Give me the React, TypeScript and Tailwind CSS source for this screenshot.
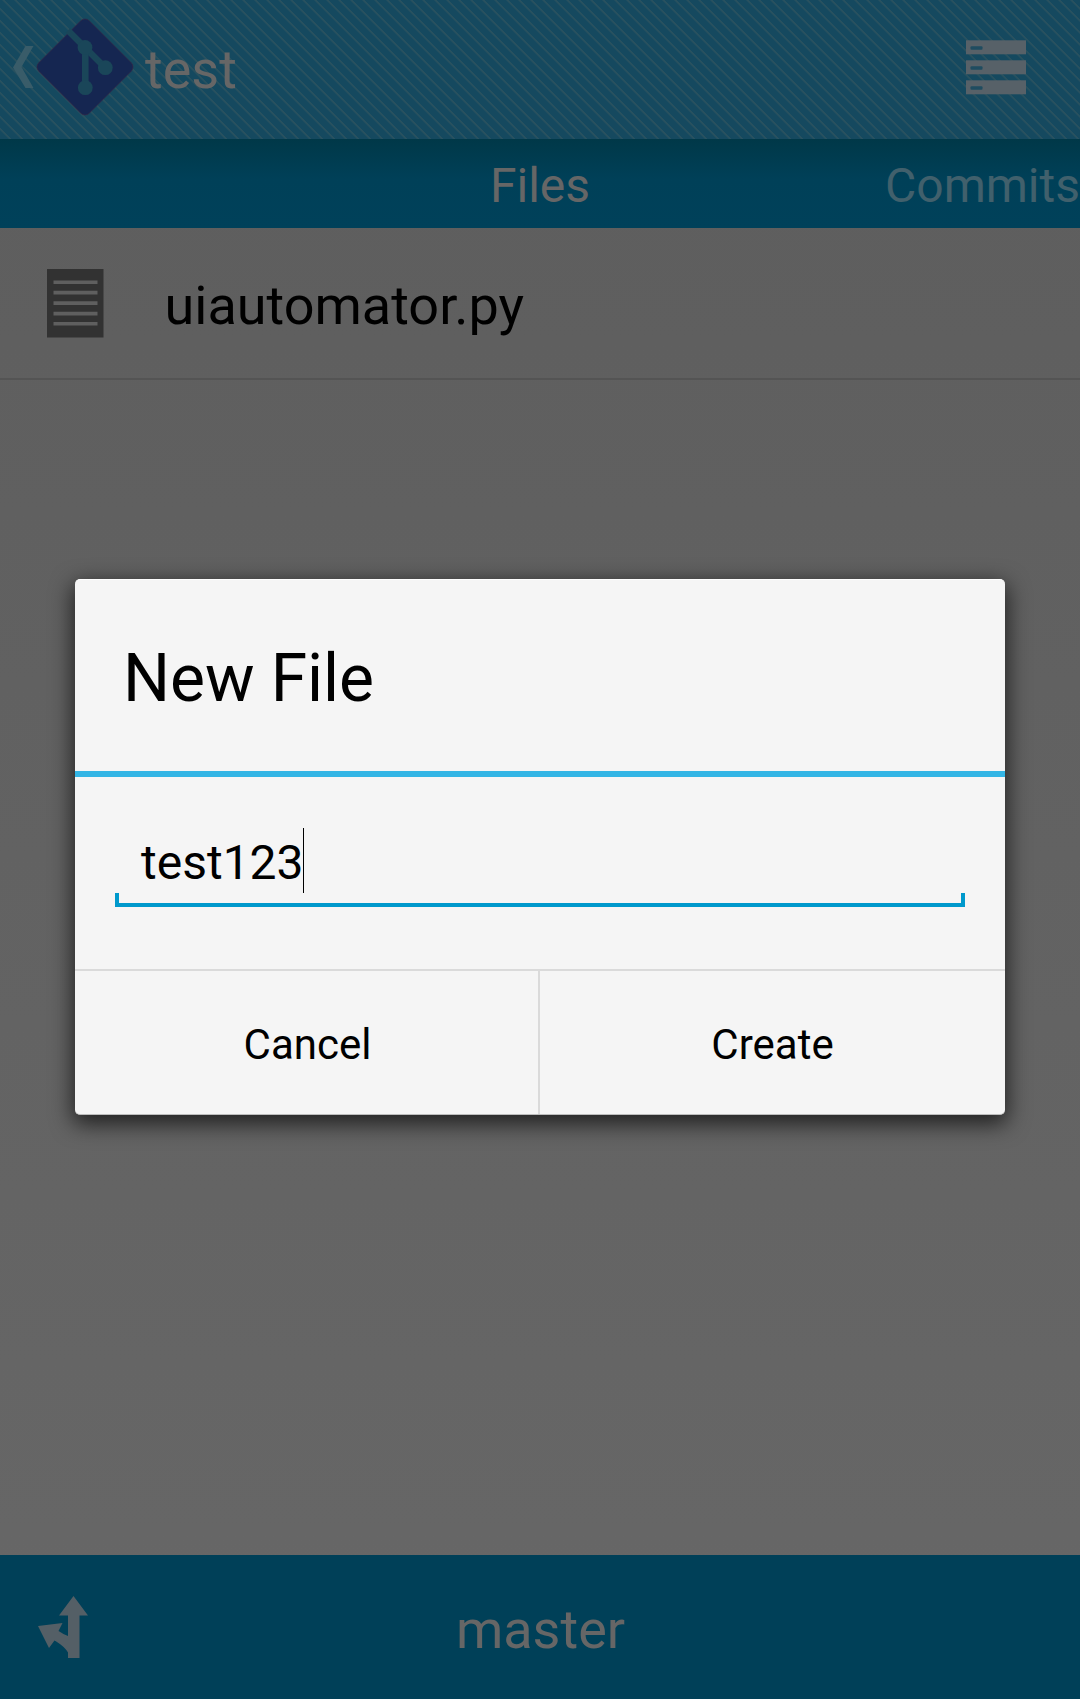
function GitLogo() {
  return (
    <svg className="h-[98px] w-[98px] shrink-0" viewBox="0 0 98 98">
      <rect x="13.3" y="13.3" width="71.4" height="71.4" rx="6" transform="rotate(45 49 49)" fill="#152651" stroke="#3a2443" strokeWidth="0.6" />
      <g stroke="#1a4659" fill="none">
        <path d="M32 12.5L69 49.5" strokeWidth="6.4" />
        <path d="M49.3 28V68" strokeWidth="6.6" />
      </g>
      <g fill="#1a4659">
        <circle cx="49" cy="29.5" r="7.4" />
        <circle cx="69.3" cy="49.7" r="7.4" />
        <circle cx="49.3" cy="69.7" r="7.4" />
      </g>
    </svg>
  );
}

function Header() {
  return (
    <header className="flex h-[139px] items-center bg-[#15495f] bg-[repeating-linear-gradient(45deg,transparent_0px,transparent_5.8px,#28515f_6.9px,#28515f_8.2px,transparent_8.485px)] pr-[54px] pl-[12px]">
      <svg className="mt-[-5px] h-[42px] w-[22px]" viewBox="0 0 22 42">
        <path d="M13.5 0H21.5L9.5 21L21.5 42H13.5L1 21.5Z" fill="#395c69" />
      </svg>
      <div className="mt-[-5px] ml-[2px]">
        <GitLogo />
      </div>
      <h1 className="ml-[11px] pt-px text-[54px] leading-[64px] text-[#666]">test</h1>
      <svg className="mt-[-5px] ml-auto h-[55px] w-[60px]" viewBox="0 0 60 55">
        {[0, 20, 40].map((y) => (
          <g key={y}>
            <rect x="0" y={y + 0.3} width="60" height="14" fill="#576168" />
            <rect x="4.5" y={y + 6.2} width="12" height="3.6" rx="1" fill="#1f4c60" />
          </g>
        ))}
      </svg>
    </header>
  );
}

function Dialog() {
  return (
    <div className="absolute top-[579px] left-[75px] flex h-[536px] w-[930px] flex-col rounded-[5px] border-t border-b border-t-white border-b-[#bdbdbd] bg-[#f5f5f5] text-black shadow-[0_7px_22px_2px_rgba(0,0,0,0.68)]">
      <div className="flex h-[191px] items-center px-[48px] pt-[6px]">
        <h2 className="text-[66px] leading-[78px] tracking-[-0.1px]">New File</h2>
      </div>
      <div className="h-[6px] bg-[#33b5e5]" />
      <div className="flex h-[192px] flex-col px-[40px] pt-[51px]">
        <div className="flex h-[65px] items-center pl-[26px]">
          <span className="w-[162px] pt-[4px] text-[48px] leading-[56px]">test123</span>
          <span className="h-[65px] w-px bg-black" />
        </div>
        <div className="h-[14px] border-4 border-t-0 border-[#0099cc]" />
      </div>
      <div className="grid grow grid-cols-2 border-t-2 border-[#dadada] text-[42px] leading-[50px]">
        <button className="flex items-center justify-center border-r-2 border-[#dadada] pt-[4px] pl-[2px]">Cancel</button>
        <button className="flex items-center justify-center pt-[4px]">Create</button>
      </div>
    </div>
  );
}

export default function App() {
  return (
    <div className="relative flex h-[1699px] w-[1080px] flex-col overflow-hidden bg-linear-to-b from-[#5d5d5d] to-[#676767] font-['Roboto',sans-serif]">
      <Header />
      <nav className="grid h-[89px] grid-cols-[1fr_auto_1fr] items-center bg-linear-to-b from-[#003848] via-[#004058] via-45% to-[#00415a] pt-[4px] text-[48px] leading-[56px]">
        <span />
        <span className="text-[#666]">Files</span>
        <span className="text-right text-[#41606c]">Commits</span>
      </nav>
      <div className="flex h-[152px] items-center border-b-2 border-[#545454] pl-[47px]">
        <svg className="h-[69px] w-[57px]" viewBox="0 0 57 69">
          <rect width="56.5" height="68.5" fill="#323232" />
          {[13.3, 23.6, 34.1, 44.6, 54.8].map((y) => (
            <path key={y} d={`M6.5 ${y}H50.5`} stroke="#5f5f5f" strokeWidth="3.6" />
          ))}
        </svg>
        <span className="ml-[60.5px] pt-[6px] text-[54px] leading-[64px] text-black">uiautomator.py</span>
      </div>
      <footer className="mt-auto grid h-[144px] grid-cols-[1fr_auto_1fr] items-center bg-[#004058] pt-[5px] pr-[36px] pl-[37px]">
        <svg className="mt-[-6px] h-[64px] w-[52px]" viewBox="0 0 52 64">
          <path d="M36.5 1L51 20.5H42.5V63H31V57.5C28 52 22 48 17.5 45.5L12 53L1 31L25.5 28L21.5 36C25 38 28 40 31 41V20.5H22Z" fill="#545f66" />
        </svg>
        <span className="text-[54px] leading-[64px] text-[#666]">master</span>
      </footer>
      <Dialog />
    </div>
  );
}
